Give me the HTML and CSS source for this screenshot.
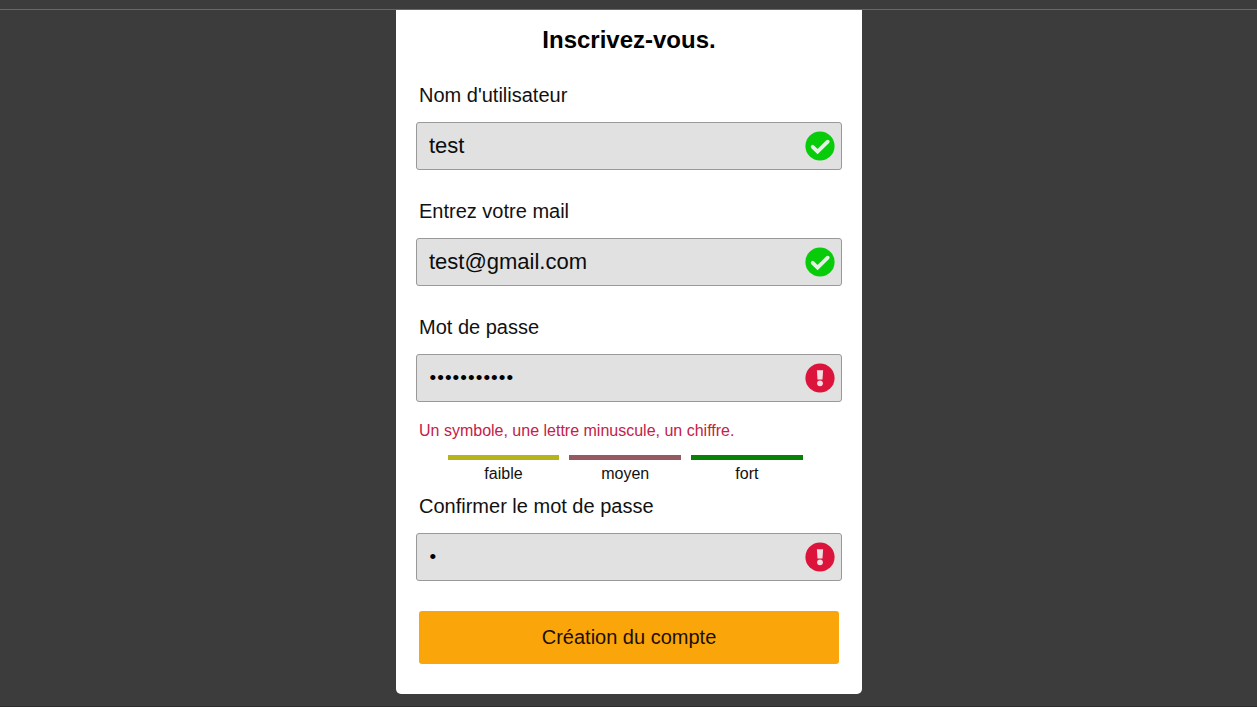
FILE: index.html
```html
<!DOCTYPE html>
<html lang="fr">
<head>
<meta charset="utf-8">
<title>Inscription</title>
<link rel="stylesheet" href="styles.css">
</head>
<body>
<header class="topbar"></header>
<main class="page">
  <form class="card">
    <h1 class="title">Inscrivez-vous.</h1>
    <div class="group">
      <label class="label" for="user">Nom d'utilisateur</label>
      <div class="field">
        <input class="input" id="user" type="text" value="test">
        <svg class="icon" viewBox="0 0 30 30"><circle class="ok" cx="15" cy="15" r="14.6"/><path class="check" d="M7.700 15.800l4.900 4.800L22.700 10.700"/></svg>
      </div>
    </div>
    <div class="group">
      <label class="label" for="mail">Entrez votre mail</label>
      <div class="field">
        <input class="input" id="mail" type="text" value="test@gmail.com">
        <svg class="icon" viewBox="0 0 30 30"><circle class="ok" cx="15" cy="15" r="14.6"/><path class="check" d="M7.700 15.800l4.900 4.800L22.700 10.700"/></svg>
      </div>
    </div>
    <div class="group group-password">
      <label class="label" for="pass">Mot de passe</label>
      <div class="field">
        <input class="input password" id="pass" type="password" value="motdepasseX">
        <svg class="icon" viewBox="0 0 30 30"><circle class="error" cx="15" cy="15" r="14.6"/><path class="mark" d="M11.900 7.300h6.200l-.6 9.300h-5z"/><circle class="mark" cx="15" cy="20.300" r="2.900"/></svg>
      </div>
      <p class="message">Un symbole, une lettre minuscule, un chiffre.</p>
      <div class="strength">
        <div class="level weak">faible</div>
        <div class="level medium">moyen</div>
        <div class="level strong">fort</div>
      </div>
    </div>
    <div class="group">
      <label class="label" for="confirm">Confirmer le mot de passe</label>
      <div class="field">
        <input class="input password" id="confirm" type="password" value="m">
        <svg class="icon" viewBox="0 0 30 30"><circle class="error" cx="15" cy="15" r="14.6"/><path class="mark" d="M11.900 7.300h6.200l-.6 9.300h-5z"/><circle class="mark" cx="15" cy="20.300" r="2.900"/></svg>
      </div>
    </div>
    <button class="submit" type="button">Création du compte</button>
  </form>
</main>
</body>
</html>
```
FILE: styles.css
```css
* { box-sizing: border-box; }
body {
  margin: 0;
  height: 707px;
  overflow: hidden;
  background: #3c3c3c;
  border-bottom: 1px solid #2c2c2c;
  color: #111;
  font-family: "Liberation Sans", Arial, sans-serif;
}
.topbar { height: 10px; border-bottom: 1px solid #686868; }
.page { display: flex; justify-content: center; padding-left: 1px; }
.card {
  width: 466px;
  height: 684px;
  padding: 16px 20px 30px;
  background: #fff;
  border-radius: 0 0 5px 5px;
}
.title {
  margin: 0 0 27px;
  color: #000;
  font-size: 24px;
  line-height: 28px;
  text-align: center;
}
.group { margin-bottom: 30px; }
.group:not(.group-password) + .group { margin-top: -3px; }
.label {
  display: block;
  margin-bottom: 13px;
  padding-left: 3px;
  font-size: 20px;
  line-height: 28px;
}
.field {
  display: flex;
  align-items: center;
  height: 48px;
  padding: 0 6px 0 12px;
  background: #e1e1e1;
  border: 1px solid #999;
  border-radius: 3px;
}
.input {
  flex: 1;
  min-width: 0;
  height: 46px;
  padding: 0;
  border: 0;
  outline: 0;
  background: transparent;
  color: #0c0c0c;
  font: 22px "Liberation Sans", Arial, sans-serif;
}
.password {
  padding-left: 0.5px;
  font-size: 19px;
  letter-spacing: 1.05px;
  color: #000;
}
.icon { width: 30px; height: 30px; }
.ok { fill: #08cb0a; }
.error { fill: #dc143c; }
.check { fill: none; stroke: #e1f3e1; stroke-width: 3.8; stroke-linecap: round; }
.mark { fill: #f1dcdf; }
.group-password { margin-bottom: 8px; }
.message {
  margin: 19px 0 14px;
  padding-left: 3px;
  color: #c32148;
  font-size: 16px;
  line-height: 20px;
}
.strength { display: flex; gap: 10px; padding: 0 39.200px 0 31.600px; }
.level {
  flex: 1;
  border-top: 5px solid;
  font-size: 16px;
  line-height: 28px;
  height: 29px;
  text-align: center;
}
.weak { border-top-color: #b5b51b; }
.medium { border-top-color: #945a60; }
.strong { border-top-color: #078207; }
.submit {
  display: block;
  width: 420px;
  height: 53px;
  margin: 0 auto;
  padding: 0;
  border: 0;
  border-radius: 3px;
  background: #faa50a;
  color: #1b1006;
  font: 20px "Liberation Sans", Arial, sans-serif;
}
```
